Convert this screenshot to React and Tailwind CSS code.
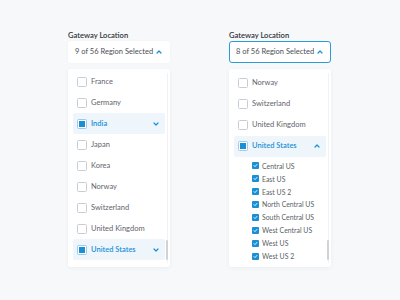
import React from "react";

const Chevron = ({ up }) => (
  <svg width="6" height="4" viewBox="0 0 6 4" className="shrink-0">
    <path d={up ? "M1 3 L3 1 L5 3" : "M1 1 L3 3 L5 1"} fill="none" stroke="#1a8fd4" strokeWidth="1.2" strokeLinecap="round" strokeLinejoin="round" />
  </svg>
);

const Box = () => <span className="w-[10px] h-[10px] shrink-0 rounded-[1.5px] border border-[#c9cdd2] bg-white" />;
const Partial = () => (
  <span className="w-[10px] h-[10px] shrink-0 rounded-[1.5px] border border-[#9fcbe8] bg-white flex items-center justify-center">
    <span className="w-[6px] h-[6px] bg-[#1a8fd4]" />
  </span>
);
const Check = () => (
  <span className="w-[7px] h-[7px] shrink-0 rounded-[1px] bg-[#1a8fd4] flex items-center justify-center">
    <svg width="5" height="5" viewBox="0 0 5 5"><path d="M1 2.6 L2 3.6 L4 1.4" fill="none" stroke="white" strokeWidth="0.9" strokeLinecap="round" strokeLinejoin="round" /></svg>
  </span>
);

const Row = ({ label }) => (
  <div className="h-[21px] flex items-center pl-[9px] gap-[4px] text-[7.5px] text-[#5f646b]">
    <Box />
    <span>{label}</span>
  </div>
);

const Group = ({ label, up }) => (
  <div className="h-[21px] mx-[5px] flex items-center pl-[4px] pr-[6px] gap-[4px] bg-[#eef6fc] rounded-[2px] text-[7.5px] text-[#1a8fd4] font-semibold">
    <Partial />
    <span className="flex-1">{label}</span>
    <Chevron up={up} />
  </div>
);

const Sub = ({ label }) => (
  <div className="h-[12.9px] flex items-center pl-[23px] gap-[3px] text-[6.9px] text-[#5a5f66]">
    <Check />
    <span>{label}</span>
  </div>
);

const Scroll = () => (
  <div className="absolute right-[2px] top-[4px] bottom-[4px] w-[2px] flex flex-col justify-end">
    <div className="absolute left-[0.5px] top-0 bottom-0 w-px bg-[#f1f2f4]" />
    <div className="relative h-[20px] w-[2px] bg-[#cfd2d6] rounded-full mb-[3px]" />
  </div>
);

export default function App() {
  return (
    <div className="w-[400px] h-[300px] bg-[#f7f8fa] flex gap-[59px] pl-[68px] pt-[30px]" style={{ fontFamily: "Lato, 'Open Sans', sans-serif" }}>
      <div className="w-[102px] flex flex-col">
        <div className="h-[10px] text-[7.6px] leading-[10px] font-semibold text-[#2f3439]">Gateway Location</div>
        <div className="mt-[1px] h-[22px] bg-white rounded-[3px] shadow-[0_0_3px_rgba(0,0,0,0.04)] flex items-center pl-[7px] pr-[8px] text-[7.5px] text-[#4a4f55]">
          <span className="flex-1">9 of 56 Region Selected</span>
          <Chevron up />
        </div>
        <div className="mt-[6px] h-[198px] bg-white rounded-[3px] shadow-[0_1px_4px_rgba(0,0,0,0.05)] relative pt-[2px] overflow-hidden">
          <Row label="France" />
          <Row label="Germany" />
          <Group label="India" />
          <Row label="Japan" />
          <Row label="Korea" />
          <Row label="Norway" />
          <Row label="Switzerland" />
          <Row label="United Kingdom" />
          <Group label="United States" />
          <Scroll />
        </div>
      </div>
      <div className="w-[102px] flex flex-col">
        <div className="h-[10px] text-[7.6px] leading-[10px] font-semibold text-[#2f3439]">Gateway Location</div>
        <div className="mt-[1px] h-[22px] bg-white rounded-[3px] border border-[#2a9ad8] flex items-center pl-[6px] pr-[7px] text-[7.5px] text-[#4a4f55]">
          <span className="flex-1">8 of 56 Region Selected</span>
          <Chevron up />
        </div>
        <div className="mt-[6px] h-[198px] bg-white rounded-[3px] shadow-[0_1px_4px_rgba(0,0,0,0.05)] relative pt-[3.5px] overflow-hidden">
          <Row label="Norway" />
          <Row label="Switzerland" />
          <Row label="United Kingdom" />
          <Group label="United States" up />
          <div className="pt-[3px]">
            <Sub label="Central US" />
            <Sub label="East US" />
            <Sub label="East US 2" />
            <Sub label="North Central US" />
            <Sub label="South Central US" />
            <Sub label="West Central US" />
            <Sub label="West US" />
            <Sub label="West US 2" />
          </div>
          <Scroll />
        </div>
      </div>
    </div>
  );
}
